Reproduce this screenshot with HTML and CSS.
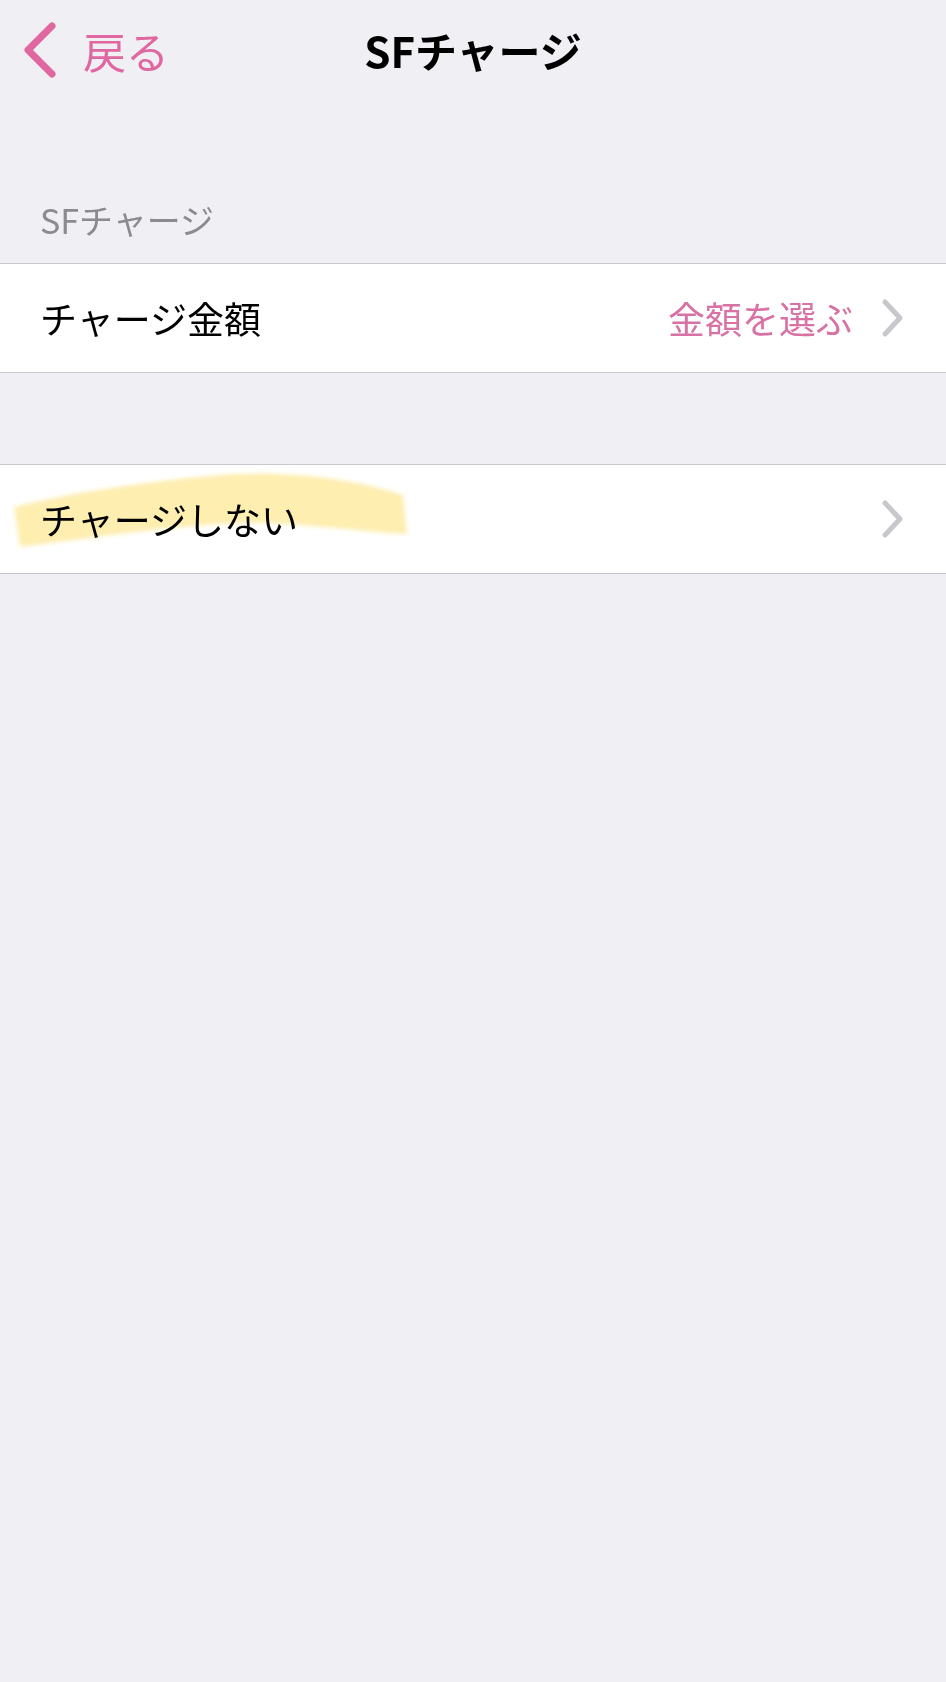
FILE: index.html
```html
<!DOCTYPE html>
<html lang="ja">
<head>
    <meta charset="UTF-8">
    <meta name="viewport" content="width=device-width, initial-scale=1.0">
    <title>SFチャージ</title>
    <link rel="stylesheet" href="styles.css">
</head>
<body>

    <header class="navbar">
        <a class="back" href="#">
            <svg class="back-icon" viewBox="0 0 36 58" width="36" height="58">
                <path d="M32 5 L8 29 L32 53" fill="none" stroke="currentColor" stroke-width="7" stroke-linecap="round" stroke-linejoin="round"/>
            </svg>
            <span>戻る</span>
        </a>
        <h1 class="title">SFチャージ</h1>
        <div></div>
    </header>

    <div class="section-label">SFチャージ</div>
    <div class="group">
        <div class="row">
            <span class="row-label">チャージ金額</span>
            <span class="row-value">金額を選ぶ</span>
            <svg class="chevron" viewBox="0 0 24 40" width="24" height="40">
                <path d="M4 4 L19 20 L4 36" fill="none" stroke="currentColor" stroke-width="5" stroke-linecap="round" stroke-linejoin="round"/>
            </svg>
        </div>
    </div>

    <div class="group group-gap">
        <div class="row marked">
            <span class="row-label">チャージしない</span>
            <svg class="chevron" viewBox="0 0 24 40" width="24" height="40">
                <path d="M4 4 L19 20 L4 36" fill="none" stroke="currentColor" stroke-width="5" stroke-linecap="round" stroke-linejoin="round"/>
            </svg>
            <!-- 蛍光ペンの跡 -->
            <svg class="highlight" viewBox="0 0 420 100" width="420" height="100">
                <defs>
                    <filter id="soft"><feGaussianBlur stdDeviation="2.2"/></filter>
                </defs>
                <path d="M14 42 C60 30 150 15 233 9 C300 6 362 16 403 30 L407 69 C360 67 300 57 240 58 C170 61 90 73 20 82 Z" fill="#feeeb0" filter="url(#soft)"/>
            </svg>
        </div>
    </div>

</body>
</html>
```

FILE: styles.css
```css
body { margin: 0; background: #efeff4; font-family: "Noto Sans CJK JP", "Noto Sans", sans-serif; color: #000; }

.navbar { display: grid; grid-template-columns: 1fr auto 1fr; align-items: center; height: 100px; padding: 0 20px; }
.back { display: flex; align-items: center; color: #e0679f; text-decoration: none; font-size: 43px; line-height: 1; }
.back-icon { margin-right: 27px; }
.title { margin: 0; font-size: 42px; font-weight: bold; line-height: 1; letter-spacing: 0; }

.section-label { padding: 100px 40px 23px; font-size: 34px; line-height: 40px; color: #8a8a8f; }

.group { background: #fff; border-top: 1px solid #c8c7cc; border-bottom: 1px solid #c8c7cc; }
.group-gap { margin-top: 91px; }

.row { position: relative; display: flex; align-items: center; height: 108px; padding: 0 41px 0 40px; font-size: 37px; }
.row-label { flex: 1; }
.row-value { color: #d872a4; margin-right: 28px; }
.chevron { color: #c7c7cc; }

.marked .highlight { position: absolute; left: 0; top: 0; mix-blend-mode: multiply; pointer-events: none; }
```
